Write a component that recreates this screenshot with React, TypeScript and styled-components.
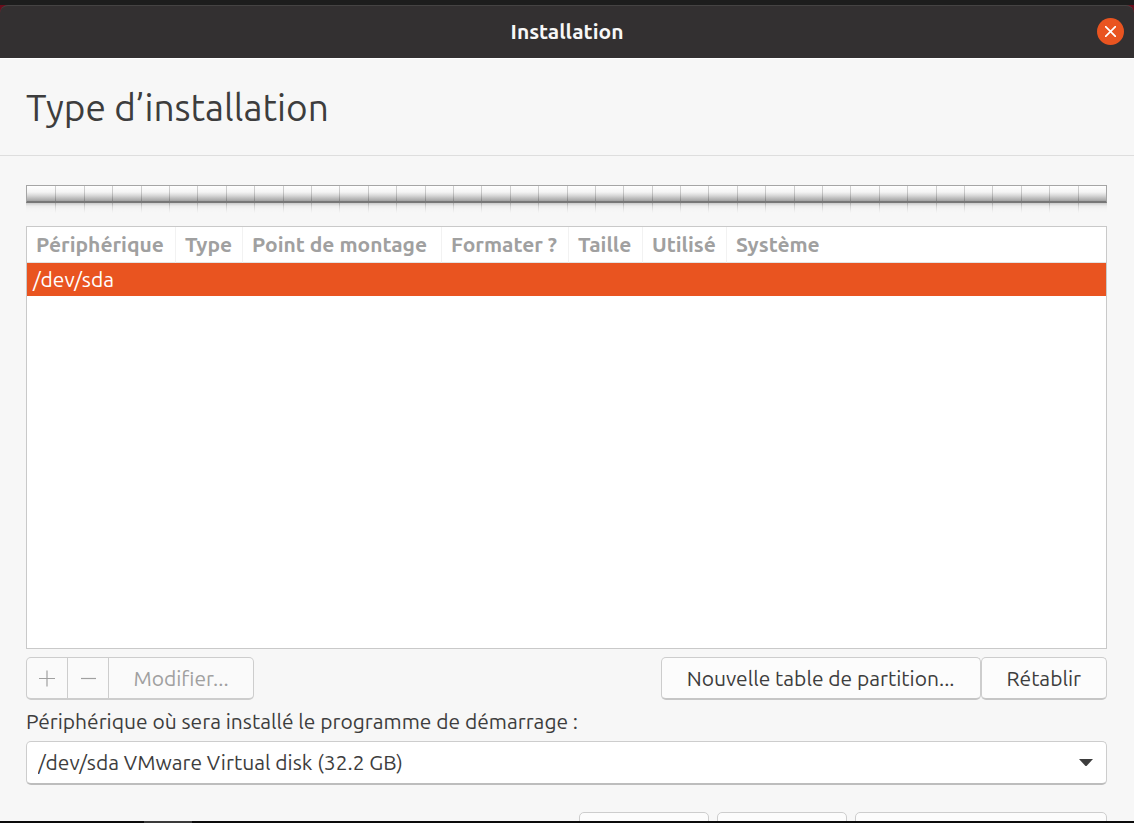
import React from "react";
import styled, { createGlobalStyle } from "styled-components";

const GlobalStyle = createGlobalStyle`
  *, *::before, *::after { box-sizing: border-box; }
  body {
    margin: 0;
    background: #1d1d1d;
    color: #3d3d3d;
    font-family: Ubuntu, "Noto Sans", sans-serif;
    font-size: 21px;
    line-height: 24px;
  }
  button, select { font: inherit; color: inherit; }
`;

const Desktop = styled.div`
  display: flex;
  flex-direction: column;
  height: 100vh;
  min-height: 480px;
  padding-top: 5px;
`;

const Window = styled.main`
  display: flex;
  flex: 1;
  flex-direction: column;
  min-height: 0;
  overflow: hidden;
  background: #f7f7f7;
`;

const TitleCorners = styled.div`
  background: #6b0d1c;
`;

const TitleBar = styled.header`
  display: grid;
  grid-template-columns: 1fr auto 1fr;
  align-items: center;
  height: 53px;
  padding: 0 10px 2px;
  border-top: 1px solid #454343;
  border-radius: 8px 8px 0 0;
  background: #333031;
  color: #f7f7f7;
  font-weight: 700;
`;

const WindowTitle = styled.span`
  grid-column: 2;
`;

const CloseButton = styled.button`
  display: grid;
  place-items: center;
  justify-self: end;
  width: 27px;
  height: 27px;
  padding: 0;
  border: 0;
  border-radius: 50%;
  background: #e95420;
  color: #fff;
`;

const Heading = styled.h1`
  margin: 0;
  padding: 25px 26px 23px;
  border-top: 1px solid #fff;
  border-bottom: 1px solid #dedede;
  font-size: 37px;
  font-weight: 400;
  line-height: 48px;
`;

const Content = styled.div`
  display: flex;
  flex: 1;
  flex-direction: column;
  min-height: 0;
  padding: 29px 27px 0 26px;
`;

const DiskBar = styled.div`
  display: grid;
  grid-template-columns: repeat(38, 1fr);
  height: 18px;
  border: 1px solid #a5a5a5;
  border-bottom: 2px solid #777;
  background: linear-gradient(#fff 0%, #f4f4f4 40%, #ddd 60%, #a2a2a2 100%);
`;

const DiskSegment = styled.span`
  & + & { border-left: 1px solid rgba(0, 0, 0, 0.18); }
`;

const DiskReflection = styled.div`
  display: grid;
  grid-template-columns: repeat(38, 1fr);
  height: 10px;
  margin-bottom: 13px;
  padding: 0 1px;
  background: linear-gradient(#c8c8c8, #ebebeb 35%, #f7f7f7);
  mask-image: linear-gradient(#000, transparent);
`;

const TableFrame = styled.div`
  flex: 1;
  min-height: 0;
  overflow: hidden;
  border: 1px solid #c9c9c9;
  background: #fff;
`;

const Table = styled.table`
  width: 100%;
  table-layout: fixed;
  border-collapse: separate;
  border-spacing: 0;
`;

const HeadCell = styled.th<{ $width?: number }>`
  width: ${(p) => (p.$width ? `${p.$width}px` : "auto")};
  height: 36px;
  padding: 0 9px 2px;
  border-bottom: 1px solid #e3e3e3;
  color: #a0a0a0;
  font-weight: 700;
  text-align: left;
  white-space: nowrap;

  &:not(:last-child) { border-right: 1px solid #f2f2f2; }
`;

const Cell = styled.td`
  height: 33px;
  padding: 0 6px 2px;
`;

const SelectedRow = styled.tr`
  background: #e95420;
  color: #fff;
`;

const Actions = styled.div`
  display: flex;
  justify-content: space-between;
  margin-top: 8px;
`;

const Group = styled.div`
  display: flex;
`;

const Button = styled.button`
  height: 43px;
  padding: 0 25px;
  border: 1px solid #cdcdcd;
  border-bottom: 2px solid #c6c6c6;
  border-radius: 5px;
  background: #fcfcfc;
  white-space: nowrap;
`;

const LinkedButton = styled.button<{ $icon?: boolean }>`
  display: grid;
  place-items: center;
  width: ${(p) => (p.$icon ? "41px" : "145px")};
  height: 43px;
  padding: 0;
  border: 1px solid #cdcdcd;
  border-bottom-width: 2px;
  background: #fafafa;

  &:disabled { color: #a0a0a0; }
  &:first-child { width: 42px; border-radius: 5px 0 0 5px; }
  &:last-child { border-radius: 0 5px 5px 0; }
  & + & { border-left: 0; }
`;

const Label = styled.label`
  margin: 9px 0 8px;
`;

const SelectBox = styled.div`
  position: relative;
  flex: none;

  svg {
    position: absolute;
    top: 18px;
    right: 14px;
    pointer-events: none;
  }
`;

const Select = styled.select`
  display: block;
  width: 100%;
  height: 44px;
  padding: 0 40px 2px 11px;
  border: 1px solid #cdcdcd;
  border-bottom: 2px solid #bdbdbd;
  border-radius: 5px;
  background: #fff;
  appearance: none;
`;

const Footer = styled.footer`
  display: flex;
  flex: none;
  justify-content: flex-end;
  gap: 8px;
  height: 9px;
  margin-top: 27px;
  overflow: hidden;
`;

const FooterButton = styled.button<{ $wide?: boolean }>`
  width: ${(p) => (p.$wide ? "252px" : "130px")};
  height: 43px;
  border: 1px solid #cdcdcd;
  border-radius: 5px;
  background: #fcfcfc;
`;

const BottomEdge = styled.div`
  flex: none;
  height: 2px;
  padding-left: 144px;
  background: #0b0b0b;
`;

const EdgeHandle = styled.div`
  width: 48px;
  height: 2px;
  background: #3a3a3a;
`;

const columns = [
  { title: "Périphérique", width: 149 },
  { title: "Type", width: 67 },
  { title: "Point de montage", width: 199 },
  { title: "Formater ?", width: 127 },
  { title: "Taille", width: 74 },
  { title: "Utilisé", width: 84 },
  { title: "Système" },
];

const segments = Array.from({ length: 38 }, (_, i) => i);

export default function App() {
  return (
    <>
      <GlobalStyle />
      <Desktop>
        <Window>
          <TitleCorners>
            <TitleBar>
              <WindowTitle>Installation</WindowTitle>
              <CloseButton aria-label="Fermer">
                <svg width="11" height="11" viewBox="0 0 11 11" fill="none" stroke="currentColor" strokeWidth="1.7">
                  <path d="M0 0 11 11M11 0 0 11" />
                </svg>
              </CloseButton>
            </TitleBar>
          </TitleCorners>
          <Heading>Type d’installation</Heading>
          <Content>
            <DiskBar>
              {segments.map((i) => <DiskSegment key={i} />)}
            </DiskBar>
            <DiskReflection>
              {segments.map((i) => <DiskSegment key={i} />)}
            </DiskReflection>
            <TableFrame>
              <Table>
                <thead>
                  <tr>
                    {columns.map((c) => (
                      <HeadCell key={c.title} $width={c.width} scope="col">{c.title}</HeadCell>
                    ))}
                  </tr>
                </thead>
                <tbody>
                  <SelectedRow>
                    <Cell>/dev/sda</Cell>
                    <Cell /><Cell /><Cell /><Cell /><Cell /><Cell />
                  </SelectedRow>
                </tbody>
              </Table>
            </TableFrame>
            <Actions>
              <Group>
                <LinkedButton $icon disabled aria-label="Ajouter">
                  <svg width="16" height="17" viewBox="0 0 16 17" stroke="currentColor" strokeWidth="1.2">
                    <path d="M0 8.5H16M8 0.5V16.5" />
                  </svg>
                </LinkedButton>
                <LinkedButton $icon disabled aria-label="Supprimer">
                  <svg width="15" height="17" viewBox="0 0 15 17" stroke="currentColor" strokeWidth="1.2">
                    <path d="M0 8.5H15" />
                  </svg>
                </LinkedButton>
                <LinkedButton disabled>Modifier...</LinkedButton>
              </Group>
              <Group>
                <Button>Nouvelle table de partition...</Button>
                <Button>Rétablir</Button>
              </Group>
            </Actions>
            <Label htmlFor="boot-device">Périphérique où sera installé le programme de démarrage :</Label>
            <SelectBox>
              <Select id="boot-device">
                <option>/dev/sda VMware Virtual disk (32.2 GB)</option>
              </Select>
              <svg width="14" height="8" viewBox="0 0 14 8" fill="#3d3d3d">
                <path d="M0 0H14L8 6.5Q7 7.5 6 6.5Z" />
              </svg>
            </SelectBox>
            <Footer>
              <FooterButton aria-label="Quitter" />
              <FooterButton aria-label="Précédent" />
              <FooterButton $wide aria-label="Installer maintenant" />
            </Footer>
          </Content>
        </Window>
        <BottomEdge>
          <EdgeHandle />
        </BottomEdge>
      </Desktop>
    </>
  );
}
